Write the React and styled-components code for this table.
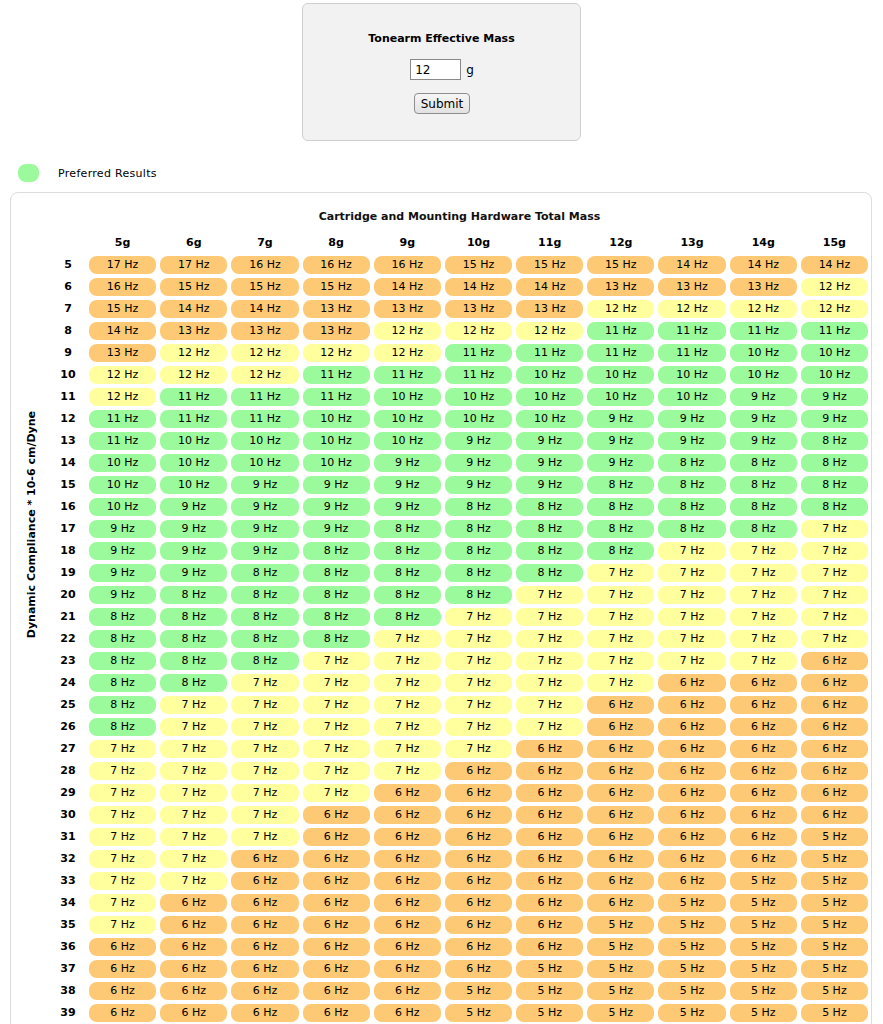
import React, { useState } from 'react';
import styled, { createGlobalStyle } from 'styled-components';

const Global = createGlobalStyle`
  html, body { margin: 0; padding: 0; background: #ffffff; }
  body { font-family: "DejaVu Sans", Verdana, sans-serif; color: #000; }
`;

const Page = styled.div`
  padding-top: 3px;
  padding-bottom: 20px;
`;

const FormBox = styled.form`
  box-sizing: border-box;
  width: 279px;
  height: 138px;
  margin: 0 auto;
  background: #f2f2f2;
  border: 1px solid #cfcfcf;
  border-radius: 6px;
  display: flex;
  flex-direction: column;
  align-items: center;
  padding-top: 28px;
`;

const FormTitle = styled.div`
  font-size: 11px;
  font-weight: bold;
  line-height: 14px;
  margin-bottom: 13px;
`;

const InputRow = styled.div`
  display: flex;
  align-items: center;
  gap: 5px;
  height: 21px;
  font-size: 12px;
  margin-bottom: 13px;
  margin-left: 1px;
`;

const MassInput = styled.input`
  box-sizing: border-box;
  width: 51px;
  height: 21px;
  border: 1px solid #8a8a8a;
  padding: 0 4px;
  font-family: "DejaVu Sans", Verdana, sans-serif;
  font-size: 12px;
  background: #fff;
  outline: none;
`;

const SubmitButton = styled.button`
  box-sizing: border-box;
  width: 56px;
  height: 21px;
  padding: 0;
  font-family: "DejaVu Sans", Verdana, sans-serif;
  font-size: 12px;
  color: #000;
  background: linear-gradient(#f6f6f6, #e2e2e2);
  border: 1px solid #8e8e8e;
  border-radius: 4px;
  margin-left: 1px;
`;

const Legend = styled.div`
  display: flex;
  align-items: center;
  gap: 19px;
  margin: 23px 0 10px 18px;
  font-size: 11px;
  letter-spacing: 0.3px;
`;

const Swatch = styled.span`
  display: block;
  width: 21px;
  height: 18px;
  border-radius: 8px;
  background: ${(p) => p.$color};
`;

const TableBox = styled.div`
  box-sizing: border-box;
  margin: 0 11px 0 10px;
  border: 1px solid #dcdcdc;
  border-radius: 8px;
  padding: 17px 3px 10px 4px;
`;

const Grid = styled.div`
  display: grid;
  grid-template-columns: 32px 34px repeat(11, 1fr);
  column-gap: 4px;
  row-gap: 4px;
`;

const GridTitle = styled.div`
  grid-row: 1;
  grid-column: 2 / -1;
  text-align: center;
  font-size: 11px;
  font-weight: bold;
  line-height: 14px;
  padding-bottom: 6px;
  color: #111;
`;

const ColHead = styled.div`
  grid-row: 2;
  grid-column: ${(p) => p.$col};
  text-align: center;
  font-size: 11px;
  font-weight: bold;
  line-height: 18px;
  height: 18px;
`;

const RowHead = styled.div`
  grid-row: ${(p) => p.$row};
  grid-column: 2;
  text-align: center;
  font-size: 11px;
  font-weight: bold;
  line-height: 18px;
  height: 18px;
`;

const SideLabel = styled.div`
  grid-column: 1;
  grid-row: 3 / span ${(p) => p.$span};
  justify-self: center;
  align-self: start;
  margin-top: 155px;
  writing-mode: vertical-rl;
  transform: rotate(180deg);
  font-size: 11px;
  font-weight: bold;
  white-space: nowrap;
`;

const COLORS = {
  good: '#9bfa9b',
  ok: '#ffff9e',
  bad: '#fdc974',
};

const Cell = styled.div`
  grid-row: ${(p) => p.$row};
  grid-column: ${(p) => p.$col};
  height: 18px;
  line-height: 18px;
  border-radius: 8px;
  text-align: center;
  font-size: 11px;
  background: ${(p) => COLORS[p.$kind]};
`;

const masses = [5, 6, 7, 8, 9, 10, 11, 12, 13, 14, 15];
const compliances = [];
for (let c = 5; c <= 45; c++) compliances.push(c);

function resonance(arm, cart, comp) {
  return Math.round(159 / Math.sqrt((arm + cart) * comp));
}

function kindOf(f) {
  if (f >= 8 && f <= 11) return 'good';
  if (f === 7 || f === 12) return 'ok';
  return 'bad';
}

export default function App() {
  const [arm, setArm] = useState('12');
  const armMass = parseFloat(arm) || 12;

  return (
    <Page>
      <Global />
      <FormBox onSubmit={(e) => e.preventDefault()}>
        <FormTitle>Tonearm Effective Mass</FormTitle>
        <InputRow>
          <MassInput value={arm} onChange={(e) => setArm(e.target.value)} />
          <span>g</span>
        </InputRow>
        <SubmitButton type="submit">Submit</SubmitButton>
      </FormBox>

      <Legend>
        <Swatch $color={COLORS.good} />
        <span>Preferred Results</span>
      </Legend>

      <TableBox>
        <Grid>
          <GridTitle>Cartridge and Mounting Hardware Total Mass</GridTitle>
          {masses.map((m, i) => (
            <ColHead key={m} $col={i + 3}>{m}g</ColHead>
          ))}
          <SideLabel $span={compliances.length}>Dynamic Compliance * 10-6 cm/Dyne</SideLabel>
          {compliances.map((c, r) => (
            <React.Fragment key={c}>
              <RowHead $row={r + 3}>{c}</RowHead>
              {masses.map((m, i) => {
                const f = resonance(armMass, m, c);
                return (
                  <Cell key={m} $row={r + 3} $col={i + 3} $kind={kindOf(f)}>
                    {f} Hz
                  </Cell>
                );
              })}
            </React.Fragment>
          ))}
        </Grid>
      </TableBox>
    </Page>
  );
}
